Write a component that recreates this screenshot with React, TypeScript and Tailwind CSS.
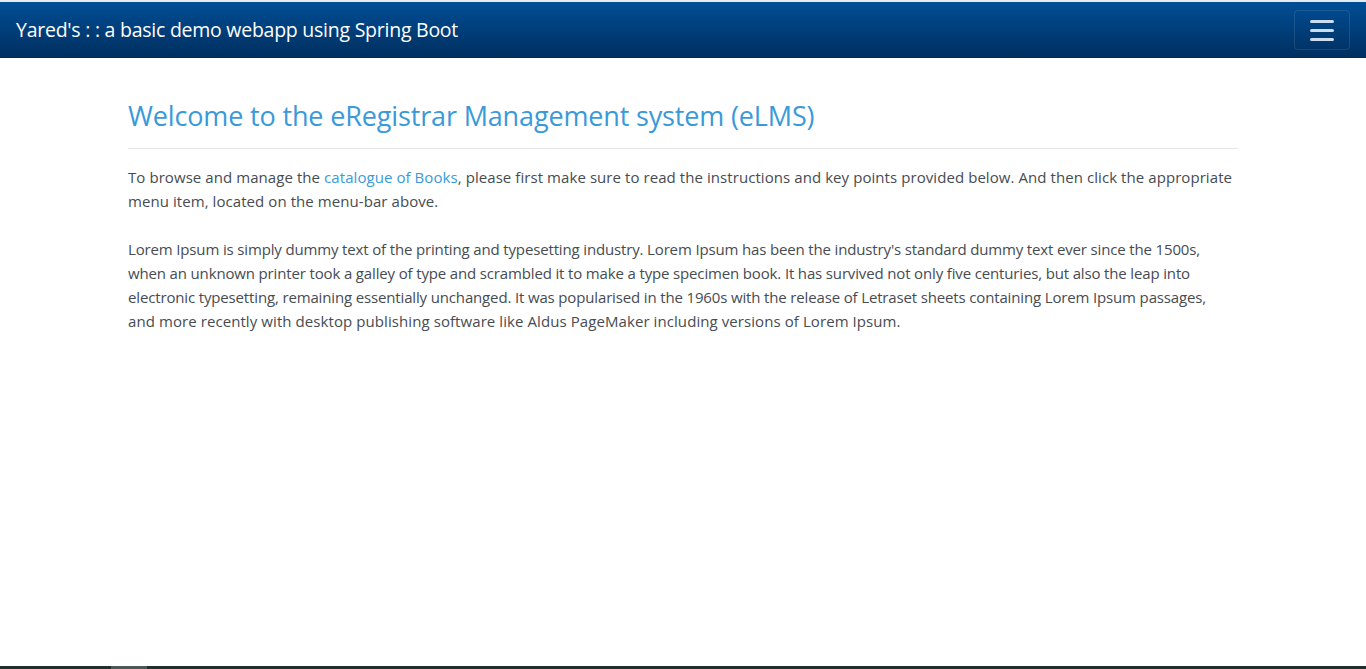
import React from 'react';

const font = { fontFamily: '"Open Sans", "Noto Sans", Arial, sans-serif' };

function Navbar() {
  return (
    <nav className="h-[56px] flex items-center justify-between pl-4 pr-4 bg-gradient-to-b from-[#004e96] to-[#002f5f]">
      <a href="#" className="text-white text-[19.5px] tracking-[-0.25px]">
        Yared's : : a basic demo webapp using Spring Boot
      </a>
      <button
        aria-label="Toggle navigation"
        className="w-[56px] h-[40px] flex flex-col items-center justify-center gap-[6px] rounded border border-white/10"
      >
        <span className="block w-6 h-[3px] bg-[#c9dcf0] rounded-sm" />
        <span className="block w-6 h-[3px] bg-[#c9dcf0] rounded-sm" />
        <span className="block w-6 h-[3px] bg-[#c9dcf0] rounded-sm" />
      </button>
    </nav>
  );
}

export default function App() {
  return (
    <div className="h-[669px] flex flex-col bg-white text-[#464c52]" style={font}>
      <div className="h-[2px] bg-[#e6e9ee]" />
      <Navbar />
      <main className="flex-1">
        <div className="max-w-[1140px] mx-auto px-[15px] pt-[39px]">
          <h2 className="text-[27px] leading-[38px] text-[#3a9ad9] tracking-[-0.15px]">
            Welcome to the eRegistrar Management system (eLMS)
          </h2>
          <hr className="mt-[13px] border-t border-[#e5e5e5]" />
          <p className="mt-[16px] text-[15px] leading-6 tracking-[0.07px]">
            To browse and manage the{' '}
            <a href="#" className="text-[#3a9ad9]">catalogue of Books</a>, please first make sure to read the
            instructions and key points provided below. And then click the appropriate
            <br />
            menu item, located on the menu-bar above.
          </p>
          <p className="mt-6 text-[15px] leading-6 tracking-[-0.15px]">
            Lorem Ipsum is simply dummy text of the printing and typesetting industry. Lorem Ipsum has been the
            industry's standard dummy text ever since the 1500s,
            <br />
            when an unknown printer took a galley of type and scrambled it to make a type specimen book. It has
            survived not only five centuries, but also the leap into
            <br />
            electronic typesetting, remaining essentially unchanged. It was popularised in the 1960s with the release
            of Letraset sheets containing Lorem Ipsum passages,
            <br />
            <span className="tracking-[0.08px]">
              and more recently with desktop publishing software like Aldus PageMaker including versions of Lorem
              Ipsum.
            </span>
          </p>
        </div>
      </main>
      <div className="h-[3px] flex bg-[#1d302c]">
        <div className="w-[111px]" />
        <div className="w-[36px] bg-[#4b5a56]" />
      </div>
    </div>
  );
}
